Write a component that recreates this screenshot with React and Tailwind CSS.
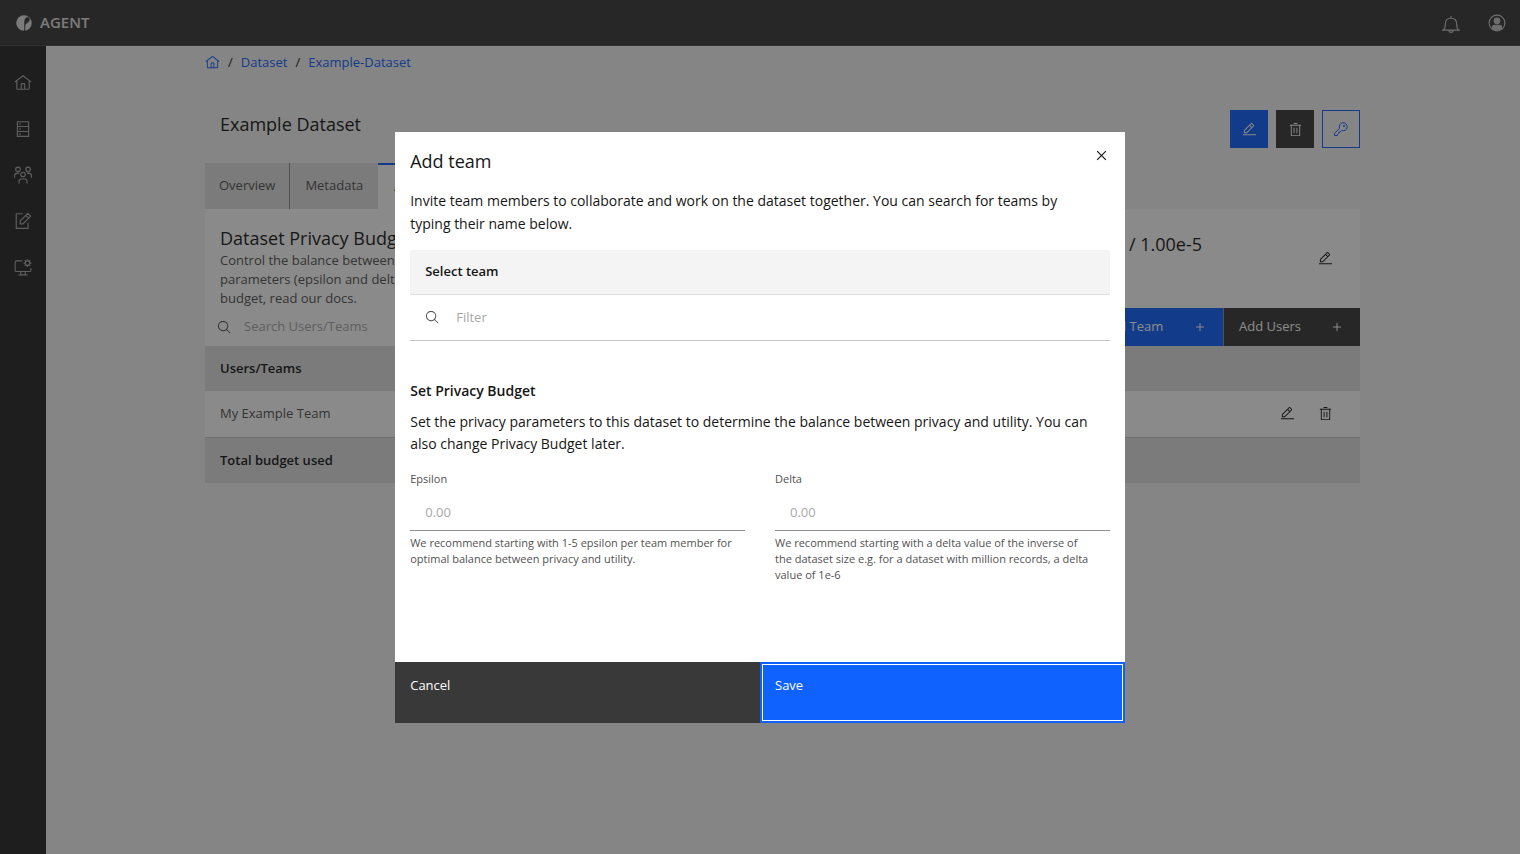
const P = {
  home: ["M16.6123,2.2138a1.01,1.01,0,0,0-1.2427,0L1,13.4194l1.2427,1.5717L4,13.6209V26a2.0041,2.0041,0,0,0,2,2H26a2.0037,2.0037,0,0,0,2-2V13.63L29.7573,15,31,13.4282ZM18,26H14V18h4Zm2,0V18a2.0023,2.0023,0,0,0-2-2H14a2.002,2.002,0,0,0-2,2v8H6V12.0615l10-7.79,10,7.8005V26Z"],
  close: ["M24 9.4 22.6 8 16 14.6 9.4 8 8 9.4 14.6 16 8 22.6 9.4 24 16 17.4 22.6 24 24 22.6 17.4 16 24 9.4z"],
  search: ["M29,27.5859l-7.5521-7.5521a11.0177,11.0177,0,1,0-1.4141,1.4141L27.5859,29ZM4,13a9,9,0,1,1,9,9A9.01,9.01,0,0,1,4,13Z"],
  edit: ["M2 26h28v2H2zM25.4 9c.8-.8.8-2 0-2.8l-3.6-3.6c-.8-.8-2-.8-2.8 0l-15 15V24h6.4l15-15zm-5-5L24 7.6l-3 3L17.4 7l3-3zM6 22v-3.6l10-10 3.6 3.6-10 10H6z"],
  trash: ["M12 12H14V24H12zM18 12H20V24H18z", "M4 6V8H6V28a2 2 0 002 2H24a2 2 0 002-2V8h2V6zM8 28V8H24V28zM12 2H20V4H12z"],
  add: ["M17 15 17 8 15 8 15 15 8 15 8 17 15 17 15 24 17 24 17 17 24 17 24 15z"],
};

function Icon({ name, className }) {
  return (
    <svg viewBox="0 0 32 32" fill="currentColor" className={className} aria-hidden="true">
      {P[name].map((d) => <path key={d} d={d} />)}
    </svg>
  );
}

function Line({ className, children, w = 2 }) {
  return (
    <svg viewBox="0 0 32 32" fill="none" stroke="currentColor" strokeWidth={w} className={className} aria-hidden="true">
      {children}
    </svg>
  );
}

const KeyIcon = () => (
  <Line className="size-4">
    <path d="M13 14.6A8 8 0 1 1 17.4 19L14 22.4H11.6V24.8L9 27.4V29H3V24.6Z" />
    <circle cx="22" cy="10" r="2" fill="currentColor" stroke="none" />
  </Line>
);

const nav = [
  { label: "Home", icon: <Icon name="home" className="size-[18px]" /> },
  {
    label: "Datasets",
    icon: (
      <Line className="size-[18px]">
        <path d="M6 3H26V29H6ZM6 11.5H26M6 20.5H26" />
        <path d="M9 7H12M9 16H12M9 25H12" />
      </Line>
    ),
  },
  {
    label: "Teams",
    icon: (
      <Line className="size-[18px]">
        <circle cx="7" cy="6" r="4" /><circle cx="25" cy="6" r="4" /><circle cx="16" cy="15" r="4" />
        <path d="M1 21V17A4 4 0 0 1 5 13H9M31 21V17A4 4 0 0 0 27 13H23M9 31V27A4 4 0 0 1 13 23H19A4 4 0 0 1 23 27V31" />
      </Line>
    ),
  },
  {
    label: "Projects",
    icon: (
      <Line className="size-[18px]">
        <path d="M15 3H4V29H25V19" />
        <path d="M11 21V16L24.5 2.5L29.5 7.5L16 21ZM21 6L26 11" />
      </Line>
    ),
  },
  {
    label: "Settings",
    icon: (
      <Line className="size-[18px]">
        <path d="M15 5H4A2 2 0 0 0 2 7V22A2 2 0 0 0 4 24H28A2 2 0 0 0 30 22V18M12 24V30M20 24V30M8 30H24" />
        <circle cx="24" cy="9" r="4" />
        <path d="M24 2V5M24 13V16M17 9H20M28 9H31M19 4L21.2 6.2M26.8 11.8L29 14M29 4L26.8 6.2M21.2 11.8L19 14" />
      </Line>
    ),
  },
];

function Field({ id, label, help }) {
  return (
    <div className="min-w-0 flex-1">
      <label htmlFor={id} className="block text-[11px] leading-4 text-[#525252]">{label}</label>
      <input id={id} placeholder="0.00" className="mt-2 block h-9 w-full border-b border-[#8d8d8d] px-[15px] text-[13px] outline-none placeholder:text-[#a8a8a8]" />
      <p className="mt-1 text-[11px] leading-[16px] text-[#525252]">{help}</p>
    </div>
  );
}

function Modal() {
  return (
    <div className="fixed inset-0 z-10 flex items-center justify-center bg-[#161616]/50">
      <section role="dialog" aria-modal="true" aria-labelledby="dialog-title" className="w-12/25 bg-white text-[#161616]">
        <div className="px-[15px] pb-[79px]">
          <header className="flex items-start justify-between pt-4">
            <h2 id="dialog-title" className="text-[18px] leading-[26px]">Add team</h2>
            <button type="button" aria-label="Close" className="-mt-1 flex h-6 w-4 items-center justify-center">
              <Icon name="close" className="size-[19px] shrink-0" />
            </button>
          </header>
          <p className="mt-[15px] pr-4 text-[14px] leading-[23px]">
            Invite team members to collaborate and work on the dataset together. You can search for teams by typing their name below.
          </p>
          <div className="mt-[15px] flex h-[45px] items-center border-b border-[#e0e0e0] bg-[#f4f4f4] px-[15px] text-[13px] font-semibold">Select team</div>
          <div className="flex h-[46px] items-center gap-4 border-b border-[#c6c6c6] px-[15px]">
            <Icon name="search" className="size-[15px] text-[#525252]" />
            <input aria-label="Filter teams" placeholder="Filter" className="h-full min-w-0 flex-1 text-[13px] outline-none placeholder:text-[#a8a8a8]" />
          </div>
          <h3 className="mt-[39px] text-[14px] leading-[22px] font-semibold">Set Privacy Budget</h3>
          <p className="mt-[9px] text-[14px] leading-[22px]">
            Set the privacy parameters to this dataset to determine the balance between privacy and utility. You can also change Privacy Budget later.
          </p>
          <div className="mt-4 flex gap-[30px]">
            <Field id="epsilon" label="Epsilon" help="We recommend starting with 1-5 epsilon per team member for optimal balance between privacy and utility." />
            <Field
              id="delta"
              label="Delta"
              help={<>We recommend starting with a delta value of the inverse of<br />the dataset size e.g. for a dataset with million records, a delta<br />value of 1e-6</>}
            />
          </div>
        </div>
        <footer className="flex h-[61px] text-[13px] leading-[18px] text-white">
          <button type="button" className="flex flex-1 items-start bg-[#393939] px-[15px] pt-[14px]">Cancel</button>
          <button type="button" className="flex flex-1 items-start border-2 border-[#0f62fe] bg-[#0f62fe] px-[13px] pt-3 inset-ring inset-ring-white">Save</button>
        </footer>
      </section>
    </div>
  );
}

export default function App() {
  return (
    <div className="flex min-h-screen flex-col bg-[#f4f4f4] font-['Open_Sans',sans-serif] text-[13px] text-[#161616]">
      <header className="flex h-[46px] items-center justify-between border-b border-[#4a4a4a] bg-[#393939] pr-[14px] pl-4 text-[#e0e0e0]">
        <a href="#home" className="flex items-center gap-2 text-[15px] font-semibold">
          <svg viewBox="0 0 32 32" className="size-4" aria-hidden="true">
            <circle cx="16" cy="16" r="15.5" fill="currentColor" />
            <path d="M16.500 32V13C17 7 20 4 24 4C29 6 28 11 25 14C22 16 18.500 18 18.500 22V32Z" fill="#393939" />
          </svg>
          AGENT
        </a>
        <div className="flex items-center gap-7 text-[#c6c6c6]">
          <button type="button" aria-label="Notifications" className="pt-1">
            <Line className="size-[18px]"><path d="M2 25H30C26 22 26 18 26 14C26 8 22 4 16 4S6 8 6 14C6 18 6 22 2 25ZM16 0V4M12 25A4 4 0 0 0 20 25" /></Line>
          </button>
          <button type="button" aria-label="Account">
            <Line className="size-[18px]"><circle cx="16" cy="16" r="14" /><circle cx="16" cy="12" r="5" fill="currentColor" /><path d="M8 26V23C8 20 10 20 12 20H20C22 20 24 20 24 23V26Q16 31 8 26Z" fill="currentColor" /></Line>
          </button>
        </div>
      </header>
      <div className="flex flex-1">
        <nav className="flex w-[46px] shrink-0 flex-col items-center gap-[28px] bg-[#262626] pt-7 text-[#a8a8a8]">
          {nav.map((n) => <a key={n.label} href="#nav" aria-label={n.label} className="block">{n.icon}</a>)}
        </nav>
        <main className="min-w-0 flex-1 pr-[160px] pl-[159px]">
          <nav aria-label="Breadcrumb" className="flex h-[33px] items-center gap-2 text-[#0f62fe]">
            <a href="#home" aria-label="Home"><Icon name="home" className="size-[15px]" /></a>
            <span className="text-[#161616]">/</span>
            <a href="#dataset">Dataset</a>
            <span className="text-[#161616]">/</span>
            <a href="#example">Example-Dataset</a>
          </nav>
          <div className="mt-[31px] flex items-start justify-between">
            <h1 className="px-[15px] text-[18px] leading-[28px]">Example Dataset</h1>
            <div className="flex gap-2">
              <button type="button" aria-label="Edit dataset" className="flex size-[38px] items-center justify-center bg-[#0f62fe] text-white"><Icon name="edit" className="size-[15px]" /></button>
              <button type="button" aria-label="Delete dataset" className="flex size-[38px] items-center justify-center bg-[#393939] text-white"><Icon name="trash" className="size-[15px]" /></button>
              <button type="button" aria-label="Access keys" className="flex size-[38px] items-center justify-center border border-[#0f62fe] text-[#0f62fe]"><KeyIcon /></button>
            </div>
          </div>
          <div role="tablist" className="mt-[15px] flex h-[46px] text-[#525252]">
            <button type="button" role="tab" className="border-r border-[#8d8d8d] bg-[#e0e0e0] px-[14px]">Overview</button>
            <button type="button" role="tab" className="bg-[#e0e0e0] px-[15px]">Metadata</button>
            <button type="button" role="tab" aria-selected="true" className="border-t-2 border-[#0f62fe] bg-white px-4 font-semibold text-[#161616]">Access</button>
          </div>
          <section className="bg-white">
            <div className="flex h-[99px] items-start justify-between px-[15px] pt-4">
              <div className="w-[460px]">
                <h2 className="text-[18px] leading-[26px]">Dataset Privacy Budget</h2>
                <p className="leading-[19px] text-[#525252]">
                  Control the balance between the privacy and utility<br />
                  parameters (epsilon and delta). To learn more about<br />
                  budget, read our docs.
                </p>
              </div>
              <div className="flex items-start gap-[116px] pr-3">
                <p className="pt-1 text-[18px] leading-[30px]">5.00 / 1.00e-5</p>
                <button type="button" aria-label="Edit privacy budget" className="pt-[26px]"><Icon name="edit" className="size-[15px]" /></button>
              </div>
            </div>
            <div className="flex h-[38px]">
              <label className="flex flex-1 items-center gap-3 pl-3 text-[#525252]">
                <Icon name="search" className="size-[15px]" />
                <input aria-label="Search users and teams" placeholder="Search Users/Teams" className="min-w-0 flex-1 outline-none placeholder:text-[#a8a8a8]" />
              </label>
              <button type="button" className="flex w-[136px] items-center justify-between bg-[#0f62fe] px-[15px] text-white">Add Team<Icon name="add" className="size-4" /></button>
              <button type="button" className="flex w-[137px] items-center justify-between border-l border-[#8d8d8d] bg-[#393939] px-[15px] text-white">Add Users<Icon name="add" className="size-4" /></button>
            </div>
            <table className="w-full text-left">
              <thead>
                <tr className="h-[45px] bg-[#e0e0e0]"><th className="px-[15px] font-semibold">Users/Teams</th><th aria-label="Actions" /></tr>
              </thead>
              <tbody>
                <tr className="h-[46px] border-b border-[#c6c6c6] text-[#525252]">
                  <td className="px-[15px]">My Example Team</td>
                  <td className="w-[116px]">
                    <div className="flex justify-end gap-[23px] pr-[27px] text-[#161616]">
                      <button type="button" aria-label="Edit budget"><Icon name="edit" className="size-[15px]" /></button>
                      <button type="button" aria-label="Remove team"><Icon name="trash" className="size-[15px]" /></button>
                    </div>
                  </td>
                </tr>
                <tr className="h-[46px] bg-[#e0e0e0]"><th scope="row" className="px-[15px] font-semibold">Total budget used</th><td /></tr>
              </tbody>
            </table>
          </section>
        </main>
      </div>
      <Modal />
    </div>
  );
}
